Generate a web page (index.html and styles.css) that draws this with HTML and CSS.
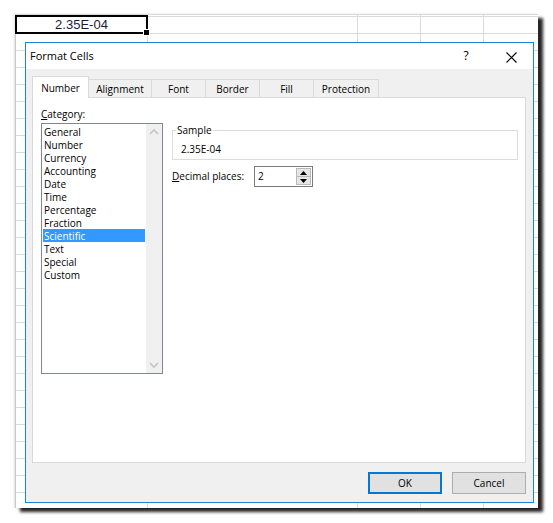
FILE: index.html
```html
<!DOCTYPE html>
<html>
<head>
<meta charset="utf-8">
<link rel="stylesheet" href="styles.css">
</head>
<body>
<div class="page">
  <div class="sheet">
    <div class="cell">2.35E-04<span class="handle"></span></div>
  </div>
  <div class="dialog">
    <div class="titlebar">
      <span class="title">Format Cells</span>
      <span class="help">?</span>
      <span class="close"><svg width="11" height="11" viewBox="0 0 11 11"><path d="M0.5 0.5 L10.5 10.5 M10.5 0.5 L0.5 10.5" stroke="#000" stroke-width="1.1" fill="none"/></svg></span>
    </div>
    <div class="body">
      <div class="tabs">
        <div class="tab sel t1">Number</div>
        <div class="tab t2">Alignment</div>
        <div class="tab t3">Font</div>
        <div class="tab t4">Border</div>
        <div class="tab t5">Fill</div>
        <div class="tab t6">Protection</div>
      </div>
      <div class="panel">
        <div class="left">
          <div class="label"><u>C</u>ategory:</div>
          <div class="list">
            <div class="items">
              <div class="item">General</div>
              <div class="item">Number</div>
              <div class="item">Currency</div>
              <div class="item">Accounting</div>
              <div class="item">Date</div>
              <div class="item">Time</div>
              <div class="item">Percentage</div>
              <div class="item">Fraction</div>
              <div class="item active">Scientific</div>
              <div class="item">Text</div>
              <div class="item">Special</div>
              <div class="item">Custom</div>
            </div>
            <div class="scroll">
              <svg class="chev" width="16" height="17" viewBox="0 0 16 17"><path d="M4 10 L8 6 L12 10" stroke="#c4c4c4" stroke-width="1.6" fill="none"/></svg>
              <svg class="chev" width="16" height="17" viewBox="0 0 16 17"><path d="M4 7 L8 11 L12 7" stroke="#c4c4c4" stroke-width="1.6" fill="none"/></svg>
            </div>
          </div>
        </div>
        <div class="right">
          <fieldset class="sample">
            <legend>Sample</legend>
            <div class="value">2.35E-04</div>
          </fieldset>
          <div class="decimal">
            <span class="dlabel"><u>D</u>ecimal places:</span>
            <div class="spin">
              <span class="num">2</span>
              <div class="spinbtns">
                <div class="sb"><svg width="7" height="4" viewBox="0 0 7 4"><path d="M0 4 L3.5 0 L7 4 Z" fill="#000"/></svg></div>
                <div class="sb"><svg width="7" height="4" viewBox="0 0 7 4"><path d="M0 0 L3.5 4 L7 0 Z" fill="#000"/></svg></div>
              </div>
            </div>
          </div>
        </div>
      </div>
      <div class="buttons">
        <div class="btn ok">OK</div>
        <div class="btn">Cancel</div>
      </div>
    </div>
  </div>
</div>
</body>
</html>
```
FILE: styles.css
```css
html, body {
  margin: 0;
  padding: 0;
  background: #fff;
}
.page {
  position: relative;
  width: 553px;
  height: 523px;
  overflow: hidden;
  padding: 14px 0 0 15px;
  box-sizing: border-box;
  font-family: "Open Sans", "Noto Sans", sans-serif;
  font-size: 10px;
  color: #000;
}
.sheet {
  width: 523px;
  height: 494px;
  box-sizing: border-box;
  background-color: #fff;
  background-image:
    linear-gradient(#c8c8c8, #c8c8c8),
    linear-gradient(#dadada, #dadada),
    linear-gradient(#dadada, #dadada),
    linear-gradient(#dadada, #dadada),
    linear-gradient(#dadada, #dadada),
    linear-gradient(#dadada, #dadada),
    linear-gradient(to bottom, transparent 16px, #dadada 16px);
  background-repeat: no-repeat, no-repeat, no-repeat, no-repeat, no-repeat, no-repeat, repeat;
  background-size: 1px 100%, 100% 1px, 1px 100%, 1px 100%, 1px 100%, 1px 100%, 100% 17px;
  background-position: 0 0, 0 0, 132px 0, 342px 0, 405px 0, 468px 0, 0 3px;
  box-shadow: 5px 4px 3px rgba(0, 0, 0, 0.85), -1px 0 2px rgba(0, 0, 0, 0.12);
  padding-top: 1px;
}
.cell {
  position: relative;
  width: 133px;
  height: 19px;
  box-sizing: border-box;
  border: 2px solid #000;
  background: #fff;
  font-family: "Liberation Sans", Arial, sans-serif;
  font-size: 13px;
  line-height: 15px;
  text-align: center;
  color: #1c1c3c;
}
.handle {
  position: absolute;
  right: -4px;
  bottom: -4px;
  width: 5px;
  height: 5px;
  background: #000;
  border: 1px solid #fff;
}
.dialog {
  position: absolute;
  left: 25px;
  top: 42px;
  width: 509px;
  height: 461px;
  box-sizing: border-box;
  border: 1px solid #1a84d8;
  background: #f0f0f0;
  display: flex;
  flex-direction: column;
}
.titlebar {
  height: 26px;
  background: #fff;
  display: flex;
  align-items: center;
  padding-left: 4px;
  flex: none;
}
.title {
  font-size: 11px;
  line-height: 14px;
  padding-bottom: 1px;
}
.help {
  margin-left: auto;
  margin-right: 24px;
  width: 12px;
  text-align: center;
  font-size: 12px;
  line-height: 14px;
}
.close {
  width: 30px;
  margin-right: 7px;
  display: flex;
  justify-content: center;
  align-items: center;
  padding-top: 2px;
}
.body {
  flex: 1;
  display: flex;
  flex-direction: column;
  padding: 7px 7px 8px 6px;
}
.tabs {
  height: 22px;
  display: flex;
  align-items: flex-end;
  position: relative;
  z-index: 2;
  margin-bottom: -1px;
}
.tab {
  height: 18px;
  margin-bottom: 1px;
  box-sizing: border-box;
  border: 1px solid #d9d9d9;
  border-bottom: none;
  background: #f0f0f0;
  display: flex;
  align-items: center;
  justify-content: center;
  line-height: 13px;
  margin-left: -1px;
  padding-top: 1px;
}
.tab.sel {
  height: 22px;
  margin-bottom: 0;
  background: #fff;
  margin-left: 0;
  padding-top: 2px;
  position: relative;
  z-index: 3;
}
.t1 { width: 57px; }
.t2 { width: 64px; }
.t3 { width: 55px; }
.t4 { width: 55px; }
.t5 { width: 55px; }
.t6 { width: 66px; }
.panel {
  height: 366px;
  box-sizing: border-box;
  border: 1px solid #d9d9d9;
  background: #fff;
  display: flex;
  padding: 10px 0 0 8px;
  position: relative;
  z-index: 1;
}
.left {
  display: flex;
  flex-direction: column;
}
.label {
  line-height: 13px;
  margin-bottom: 2px;
}
.list {
  width: 122px;
  height: 251px;
  box-sizing: border-box;
  border: 1px solid #828790;
  padding: 1px 0 1px 1px;
  display: flex;
}
.items {
  width: 102px;
  margin-right: 1px;
}
.item {
  height: 13px;
  line-height: 14px;
  padding-left: 1px;
  white-space: nowrap;
}
.item.active {
  background: #3399ff;
  color: #fff;
}
.scroll {
  width: 16px;
  background: #f0f0f0;
  margin-top: -1px;
  margin-bottom: -1px;
  display: flex;
  flex-direction: column;
  justify-content: space-between;
}
.chev {
  display: block;
}
.right {
  margin-left: 9px;
  display: flex;
  flex-direction: column;
}
.sample {
  width: 346px;
  box-sizing: border-box;
  margin: 16px 0 0 0;
  border: 1px solid #dcdcdc;
  padding: 0 0 3px 3px;
  min-width: 0;
}
.sample legend {
  padding: 0 1px;
  line-height: 13px;
}
.value {
  margin-top: 6px;
  padding-left: 5px;
  line-height: 13px;
}
.decimal {
  margin-top: 6px;
  display: flex;
  align-items: center;
}
.dlabel {
  width: 82px;
  line-height: 13px;
}
.spin {
  width: 59px;
  height: 21px;
  box-sizing: border-box;
  border: 1px solid #7a7a7a;
  display: flex;
  align-items: center;
  padding: 0 1px 0 3px;
}
.num {
  flex: 1;
  line-height: 13px;
}
.spinbtns {
  width: 15px;
  height: 17px;
  display: flex;
  flex-direction: column;
}
.sb {
  flex: 1;
  background: #e6e6e6;
  border: 1px solid #b9b9b9;
  display: flex;
  align-items: center;
  justify-content: center;
}
.sb + .sb {
  border-top: none;
}
.buttons {
  margin-top: 9px;
  display: flex;
  justify-content: flex-end;
  gap: 10px;
}
.btn {
  width: 74px;
  height: 22px;
  box-sizing: border-box;
  border: 1px solid #adadad;
  background: #e1e1e1;
  display: flex;
  align-items: center;
  justify-content: center;
  line-height: 13px;
  padding-top: 1px;
}
.btn.ok {
  border: 2px solid #0078d7;
}
```
